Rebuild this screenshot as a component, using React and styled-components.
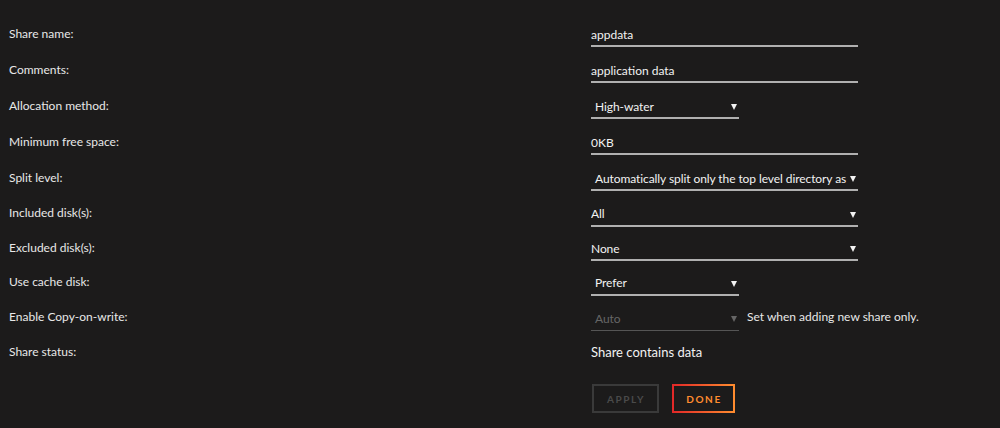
import React from "react";
import styled, { createGlobalStyle } from "styled-components";

const Global = createGlobalStyle`
  html, body {
    margin: 0;
    padding: 0;
    background: #1c1b1b;
  }
  body {
    font-family: Lato, "Liberation Sans", sans-serif;
    font-size: 12px;
    color: #f2f2f2;
  }
`;

const Form = styled.div`
  width: 1000px;
  height: 428px;
  padding-top: 15px;
  box-sizing: border-box;
  overflow: hidden;
`;

const Row = styled.div`
  display: grid;
  grid-template-columns: 591px 1fr;
  align-items: center;
  height: ${(p) => p.$h || 36}px;
`;

const Label = styled.div`
  padding-left: 9px;
  font-size: 12px;
  color: #e8e8e8;
`;

const Value = styled.div`
  display: flex;
  align-items: center;
  gap: 8px;
`;

const TextInput = styled.div`
  width: 267px;
  height: 28px;
  box-sizing: border-box;
  border-bottom: 2px solid #b0b0b0;
  display: flex;
  align-items: center;
  padding-top: 4px;
  font-size: 12px;
  color: #f2f2f2;
`;

const Select = styled.div`
  position: relative;
  width: ${(p) => (p.$wide ? 267 : 148)}px;
  height: 28px;
  box-sizing: border-box;
  border-bottom: ${(p) => (p.$disabled ? "1px solid #555" : "2px solid #b0b0b0")};
  display: flex;
  align-items: center;
  padding-top: 4px;
  padding-left: ${(p) => (p.$flush ? 0 : 4)}px;
  padding-right: 10px;
  font-size: 12px;
  letter-spacing: -0.08px;
  white-space: nowrap;
  overflow: hidden;
  color: ${(p) => (p.$disabled ? "#666" : "#f2f2f2")};
`;

const Arrow = styled.span`
  position: absolute;
  right: 2px;
  top: 13px;
  width: 0;
  height: 0;
  border-left: 3px solid transparent;
  border-right: 3px solid transparent;
  border-top: 6px solid ${(p) => (p.$disabled ? "#666" : "#f2f2f2")};
`;

const Note = styled.span`
  font-size: 12px;
  color: #e8e8e8;
`;

const Status = styled.span`
  font-size: 13px;
  color: #f2f2f2;
`;

const Buttons = styled.div`
  display: flex;
  gap: 13px;
  padding-left: 592px;
  padding-top: 15px;
`;

const Button = styled.button`
  width: ${(p) => p.$w}px;
  height: 29px;
  box-sizing: border-box;
  padding: 0 0 0 1px;
  background: transparent;
  font-family: Lato, "Liberation Sans", sans-serif;
  font-size: 10px;
  font-weight: 700;
  letter-spacing: 1.6px;
  text-transform: uppercase;
  text-align: center;
  border: 2px solid #3a3a3a;
  color: #4a4a4a;
  cursor: pointer;
  ${(p) =>
    p.$primary &&
    `
    border: 2px solid transparent;
    border-image: linear-gradient(90deg, #e22828, #ff8c2f) 1;
    color: #ff8c2f;
  `}
`;

const rows = [
  { label: "Share name:", kind: "text", value: "appdata", h: 36 },
  { label: "Comments:", kind: "text", value: "application data", h: 36 },
  { label: "Allocation method:", kind: "select", value: "High-water", h: 36 },
  { label: "Minimum free space:", kind: "text", value: "0KB", h: 36 },
  {
    label: "Split level:",
    kind: "select",
    wide: true,
    value: "Automatically split only the top level directory as",
    h: 36,
  },
  { label: "Included disk(s):", kind: "select", wide: true, flush: true, value: "All", h: 35 },
  { label: "Excluded disk(s):", kind: "select", wide: true, flush: true, value: "None", h: 34 },
  { label: "Use cache disk:", kind: "select", value: "Prefer", h: 35 },
  {
    label: "Enable Copy-on-write:",
    kind: "select",
    disabled: true,
    value: "Auto",
    note: "Set when adding new share only.",
    h: 35,
  },
  { label: "Share status:", kind: "status", value: "Share contains data", h: 35 },
];

const App = () => (
  <Form>
    <Global />
    {rows.map((r) => (
      <Row key={r.label} $h={r.h}>
        <Label>{r.label}</Label>
        <Value>
          {r.kind === "text" && <TextInput>{r.value}</TextInput>}
          {r.kind === "select" && (
            <Select $wide={r.wide} $flush={r.flush} $disabled={r.disabled}>
              {r.value}
              <Arrow $disabled={r.disabled} />
            </Select>
          )}
          {r.kind === "status" && <Status>{r.value}</Status>}
          {r.note && <Note>{r.note}</Note>}
        </Value>
      </Row>
    ))}
    <Buttons>
      <Button disabled $w={67}>Apply</Button>
      <Button $primary $w={63}>Done</Button>
    </Buttons>
  </Form>
);

export default App;
